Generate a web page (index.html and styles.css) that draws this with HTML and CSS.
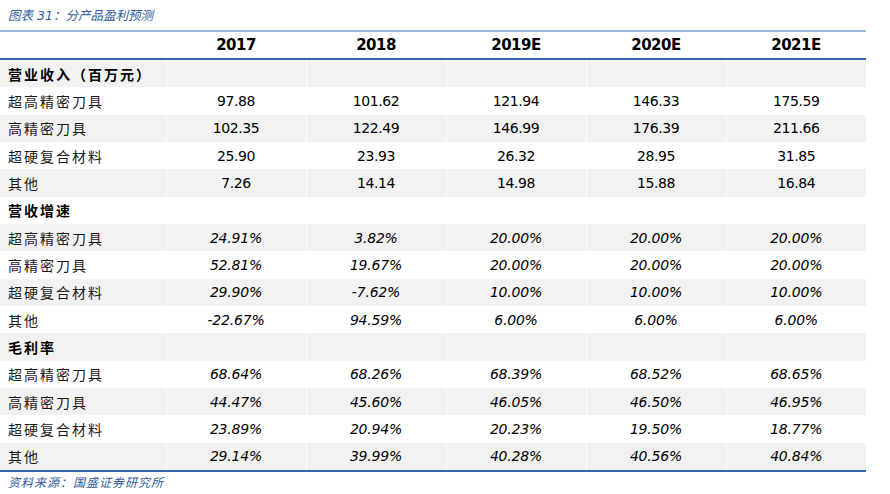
FILE: index.html
```html
<!DOCTYPE html>
<html lang="zh">
<head>
<meta charset="utf-8">
<link rel="stylesheet" href="styles.css">
</head>
<body>
<div class="caption">图表 31：分产品盈利预测</div>
<table class="data">
  <colgroup><col class="c-label"><col class="c-num"><col class="c-num"><col class="c-num"><col class="c-num"><col class="c-num"></colgroup>
  <thead>
    <tr><th></th><th>2017</th><th>2018</th><th>2019E</th><th>2020E</th><th>2021E</th></tr>
  </thead>
  <tbody>
    <tr class="sec"><td>营业收入（百万元）</td><td></td><td></td><td></td><td></td><td></td></tr>
    <tr><td>超高精密刀具</td><td>97.88</td><td>101.62</td><td>121.94</td><td>146.33</td><td>175.59</td></tr>
    <tr><td>高精密刀具</td><td>102.35</td><td>122.49</td><td>146.99</td><td>176.39</td><td>211.66</td></tr>
    <tr><td>超硬复合材料</td><td>25.90</td><td>23.93</td><td>26.32</td><td>28.95</td><td>31.85</td></tr>
    <tr><td>其他</td><td>7.26</td><td>14.14</td><td>14.98</td><td>15.88</td><td>16.84</td></tr>
    <tr class="sec"><td>营收增速</td><td></td><td></td><td></td><td></td><td></td></tr>
    <tr class="pct"><td>超高精密刀具</td><td>24.91%</td><td>3.82%</td><td>20.00%</td><td>20.00%</td><td>20.00%</td></tr>
    <tr class="pct"><td>高精密刀具</td><td>52.81%</td><td>19.67%</td><td>20.00%</td><td>20.00%</td><td>20.00%</td></tr>
    <tr class="pct"><td>超硬复合材料</td><td>29.90%</td><td>-7.62%</td><td>10.00%</td><td>10.00%</td><td>10.00%</td></tr>
    <tr class="pct"><td>其他</td><td>-22.67%</td><td>94.59%</td><td>6.00%</td><td>6.00%</td><td>6.00%</td></tr>
    <tr class="sec"><td>毛利率</td><td></td><td></td><td></td><td></td><td></td></tr>
    <tr class="pct"><td>超高精密刀具</td><td>68.64%</td><td>68.26%</td><td>68.39%</td><td>68.52%</td><td>68.65%</td></tr>
    <tr class="pct"><td>高精密刀具</td><td>44.47%</td><td>45.60%</td><td>46.05%</td><td>46.50%</td><td>46.95%</td></tr>
    <tr class="pct"><td>超硬复合材料</td><td>23.89%</td><td>20.94%</td><td>20.23%</td><td>19.50%</td><td>18.77%</td></tr>
    <tr class="pct"><td>其他</td><td>29.14%</td><td>39.99%</td><td>40.28%</td><td>40.56%</td><td>40.84%</td></tr>
  </tbody>
</table>
<div class="source">资料来源：国盛证券研究所</div>
</body>
</html>
```
FILE: styles.css
```css
html, body {
  margin: 0;
  padding: 0;
  background: #ffffff;
}
body {
  font-family: "DejaVu Sans", "Noto Sans CJK SC", sans-serif;
  color: #000000;
  width: 890px;
  height: 494px;
  overflow: hidden;
}
.caption {
  height: 30px;
  line-height: 32px;
  padding-left: 8px;
  font-size: 12.5px;
  font-style: italic;
  color: #2e5a9c;
  box-sizing: border-box;
}
.data {
  width: 866px;
  border-collapse: collapse;
  table-layout: fixed;
}
.c-label { width: 166px; }
.c-num { width: 140px; }
.data th {
  height: 26px;
  padding: 0;
  font-size: 15px;
  letter-spacing: -0.5px;
  font-weight: bold;
  text-align: center;
  color: #000000;
  border-top: 2px solid #9bb7dd;
  border-bottom: 2px solid #3565a7;
}
.data td {
  height: 27.33px;
  padding: 0;
  font-size: 14px;
  letter-spacing: -0.4px;
  text-align: center;
  color: #000000;
  border-left: 1px solid #ffffff;
}
.data td:first-child {
  text-align: left;
  padding-left: 8px;
  border-left: none;
  font-size: 14px;
  letter-spacing: 2px;
  color: #1a1a1a;
}
.data tbody tr:nth-child(odd) td {
  background: #f2f2f2;
}
.data tr.sec td:first-child {
  font-weight: bold;
  color: #000000;
}
.data tr.pct td {
  font-style: italic;
  letter-spacing: -0.2px;
}
.data tr.pct td:first-child {
  font-style: normal;
  letter-spacing: 2px;
}
.data tbody tr:last-child td {
  border-bottom: 2px solid #3565a7;
}
.source {
  padding-left: 8px;
  padding-top: 1px;
  font-size: 12px;
  font-style: italic;
  color: #2e5a9c;
  letter-spacing: 1px;
}
```
